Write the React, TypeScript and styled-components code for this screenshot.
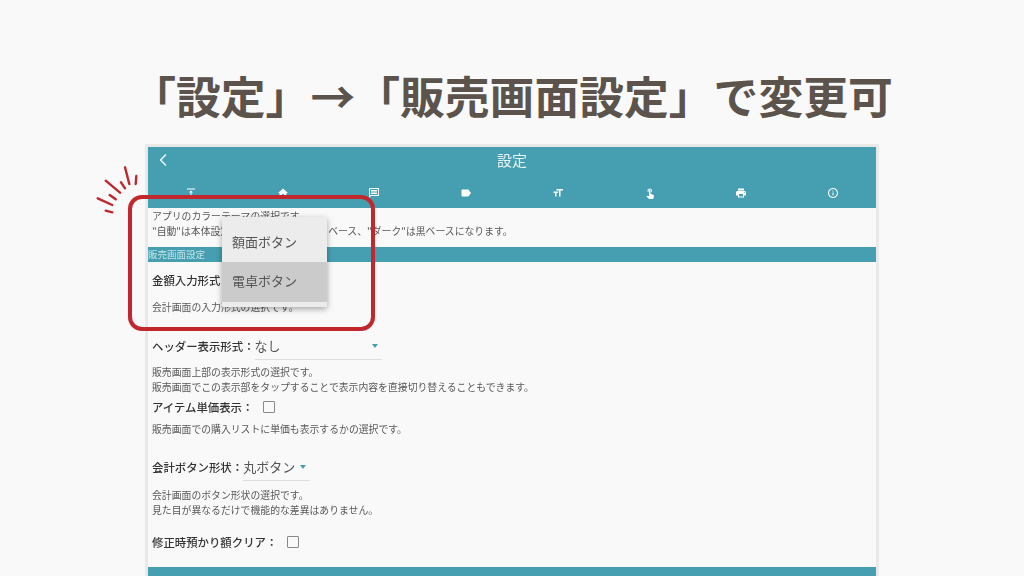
import styled, { createGlobalStyle } from "styled-components";
import { ChevronLeft } from "lucide-react";
import {
  MdFormatSize,
  MdHome,
  MdInfoOutline,
  MdLabel,
  MdOutlineMessage,
  MdPrint,
  MdTouchApp,
  MdVerticalAlignTop,
} from "react-icons/md";

const GlobalStyle = createGlobalStyle`
  html, body {
    margin: 0;
    height: 100%;
    overflow: hidden;
    background: #f9f9f9;
  }
`;

const Page = styled.div`
  position: relative;
  width: 1024px;
  height: 576px;
  overflow: hidden;
  display: flex;
  flex-direction: column;
  align-items: center;
  font-family: "Noto Sans CJK JP", "Noto Sans", sans-serif;
`;

const Headline = styled.h1`
  margin: 0;
  height: 147px;
  box-sizing: border-box;
  padding-top: 61px;
  font-size: 44.8px;
  line-height: 68px;
  font-weight: 700;
  color: #5b534c;
  white-space: nowrap;
`;

const Screen = styled.div`
  width: 728px;
  flex: 1;
  display: flex;
  flex-direction: column;
  background: #f9f9f9;
  box-shadow: 0 0 0 3px #e9e9e9;
  color: #555;
  filter: blur(0.35px);
`;

const Header = styled.header`
  background: #459fb0;
  height: 61px;
  flex-shrink: 0;
  display: flex;
  flex-direction: column;
  color: #fff;
`;

const TitleBar = styled.div`
  height: 26px;
  display: grid;
  grid-template-columns: 30px 1fr 30px;
  align-items: center;
  font-size: 15px;
  text-align: center;
  color: #e6f2f4;
  svg {
    margin-left: 5px;
  }
  span {
    margin-top: -2px;
  }
`;

const Tabs = styled.div`
  display: grid;
  grid-template-columns: repeat(8, 1fr);
  margin: 0 -3px;
  padding-top: 14px;
  justify-items: center;
  svg {
    display: block;
    font-size: 12px;
  }
`;

const Body = styled.main`
  flex: 1;
  display: flex;
  flex-direction: column;
`;

const Help = styled.p<{ $top?: number }>`
  margin: ${(p) => p.$top ?? 0}px 0 0;
  padding-left: 4px;
  font-size: 9.85px;
  line-height: 15px;
  white-space: nowrap;
  color: #585858;
  transform: translateY(1px);
`;

const SectionBar = styled.div`
  height: 15px;
  margin-top: 9px;
  background: #459fb0;
  font-size: 9.5px;
  line-height: 15px;
  color: #c5e4ea;
`;

const Row = styled.div<{ $top: number }>`
  display: flex;
  align-items: center;
  margin-top: ${(p) => p.$top}px;
  padding-left: 4px;
  height: 22px;
`;

const Label = styled.span`
  font-size: 11.4px;
  font-weight: 500;
  color: #333;
  white-space: nowrap;
`;

const Select = styled.div<{ $width: number }>`
  width: ${(p) => p.$width}px;
  height: 28px;
  flex-shrink: 0;
  display: flex;
  align-items: center;
  justify-content: space-between;
  padding-right: 4px;
  box-sizing: border-box;
  border-bottom: 1px solid #dedede;
  font-size: 13px;
  color: #555;
  &::after {
    content: "";
    border: 3px solid transparent;
    border-top: 4px solid #459fb0;
    border-bottom: 0;
  }
`;

const Checkbox = styled.span`
  width: 10px;
  height: 10px;
  margin-left: 10px;
  border: 1px solid #8a8a8a;
  border-radius: 1px;
`;

const Footer = styled.footer`
  height: 9px;
  background: #459fb0;
  flex-shrink: 0;
`;

const Menu = styled.ul`
  position: absolute;
  left: 222px;
  top: 217px;
  width: 105px;
  margin: 0;
  padding: 0 0 5px;
  list-style: none;
  background: #ececec;
  box-shadow: 0 2px 6px rgba(0, 0, 0, 0.35);
  filter: blur(0.3px);
`;

const MenuItem = styled.li<{ $active?: boolean }>`
  height: ${(p) => (p.$active ? 40 : 45)}px;
  box-sizing: border-box;
  display: flex;
  align-items: center;
  padding: ${(p) => (p.$active ? "0 0 4px 10px" : "3px 0 0 10px")};
  font-size: 13px;
  color: #555;
  background: ${(p) => (p.$active ? "#cbcbcb" : "transparent")};
`;

const Highlight = styled.div`
  position: absolute;
  left: 128px;
  top: 195px;
  width: 247px;
  height: 136px;
  box-sizing: border-box;
  border: 4px solid #c1272d;
  border-radius: 14px;
`;

const Sparks = styled.svg`
  position: absolute;
  left: 96px;
  top: 164px;
`;

const tabIcons = [
  MdVerticalAlignTop,
  MdHome,
  MdOutlineMessage,
  MdLabel,
  MdFormatSize,
  MdTouchApp,
  MdPrint,
  MdInfoOutline,
];

export default function App() {
  return (
    <Page>
      <GlobalStyle />
      <Headline>「設定」→「販売画面設定」で変更可</Headline>
      <Screen>
        <Header>
          <TitleBar>
            <ChevronLeft size={20} strokeWidth={2} />
            <span>設定</span>
          </TitleBar>
          <Tabs>
            {tabIcons.map((Icon, i) => (
              <Icon key={i} />
            ))}
          </Tabs>
        </Header>
        <Body>
          <Help>
            アプリのカラーテーマの選択です。
            <br />
            "自動"は本体設定に従い、"ライト"は白ベース、"ダーク"は黒ベースになります。
          </Help>
          <SectionBar>販売画面設定</SectionBar>
          <Row $top={7}>
            <Label>金額入力形式：</Label>
          </Row>
          <Help $top={8}>会計画面の入力形式の選択です。</Help>
          <Row $top={21}>
            <Label>ヘッダー表示形式：</Label>
            <Select $width={127}>なし</Select>
          </Row>
          <Help $top={7}>
            販売画面上部の表示形式の選択です。
            <br />
            販売画面でこの表示部をタップすることで表示内容を直接切り替えることもできます。
          </Help>
          <Row $top={2}>
            <Label>アイテム単価表示：</Label>
            <Checkbox />
          </Row>
          <Help $top={3}>販売画面での購入リストに単価も表示するかの選択です。</Help>
          <Row $top={20}>
            <Label>会計ボタン形状：</Label>
            <Select $width={67}>丸ボタン</Select>
          </Row>
          <Help $top={9}>
            会計画面のボタン形状の選択です。
            <br />
            見た目が異なるだけで機能的な差異はありません。
          </Help>
          <Row $top={14}>
            <Label>修正時預かり額クリア：</Label>
            <Checkbox />
          </Row>
        </Body>
        <Footer />
      </Screen>
      <Highlight />
      <Menu>
        <MenuItem>額面ボタン</MenuItem>
        <MenuItem $active>電卓ボタン</MenuItem>
      </Menu>
      <Sparks width="42" height="52" viewBox="0 0 42 52" fill="none" stroke="#c1272d" strokeWidth="2.4" strokeLinecap="round">
        <path d="M29 3.3 L33.3 20" />
        <path d="M40.3 12 L39.7 20" />
        <path d="M25 18.3 L29 24.3" />
        <path d="M9.7 16.7 L24 28.7" />
        <path d="M13.7 31 L19.7 35.3" />
        <path d="M1.7 34.3 L16.3 41" />
        <path d="M9.7 46.7 L16.3 48.3" />
      </Sparks>
    </Page>
  );
}
